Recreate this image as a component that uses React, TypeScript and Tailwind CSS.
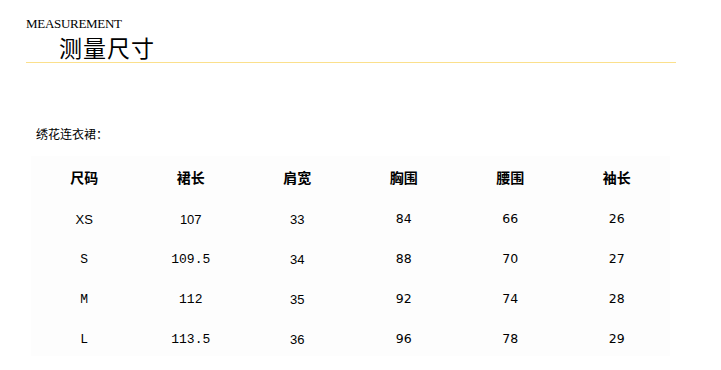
const headers = ["尺码", "裙长", "肩宽", "胸围", "腰围", "袖长"];

const mono = "font-['Liberation_Mono','Noto_Sans_CJK_SC',monospace]";
const arial = "font-['Liberation_Sans','Noto_Sans_CJK_SC',sans-serif]";
const tahoma = "font-['DejaVu_Sans','Noto_Sans_CJK_SC',sans-serif] text-[12.5px]";

// each cell: [text, font]
const rows: [string, string][][] = [
  [["XS", arial], ["107", arial], ["33", arial], ["84", tahoma], ["66", tahoma], ["26", tahoma]],
  [["S", mono], ["109.5", mono], ["34", arial], ["88", tahoma], ["70", tahoma], ["27", tahoma]],
  [["M", mono], ["112", mono], ["35", arial], ["92", tahoma], ["74", tahoma], ["28", tahoma]],
  [["L", mono], ["113.5", mono], ["36", arial], ["96", tahoma], ["78", tahoma], ["29", tahoma]],
];

export default function App() {
  return (
    <div className="w-[721px] h-[370px] bg-white text-black overflow-hidden">
      {/* Title */}
      <div className="pt-[15px] pl-[26px] pr-[45px]">
        <div className="font-['Liberation_Serif',serif] text-[13px] leading-[17px] tracking-[-0.3px]">
          MEASUREMENT
        </div>
        <div className="pl-[33px] font-['Noto_Sans_CJK_SC',sans-serif] text-[23px] leading-[30px] tracking-[1px]">
          测量尺寸
        </div>
        <div className="h-px bg-[#fbe08c]" />
      </div>

      {/* Subtitle */}
      <div className="mt-[63px] pl-[36px] font-['Noto_Sans_CJK_SC',sans-serif] text-[12px] leading-[16px]">
        绣花连衣裙：
      </div>

      {/* Table */}
      <div className="mt-[14px] ml-[31px] w-[639px] bg-[#fdfdfd]">
        <div className="grid grid-cols-6 h-[40px] pt-[2px] items-center text-center">
          {headers.map((h) => (
            <div key={h} className="font-['Noto_Sans_CJK_SC',sans-serif] font-bold text-[14px]">
              {h}
            </div>
          ))}
        </div>
        {rows.map((r, i) => (
          <div key={i} className="grid grid-cols-6 h-[40px] pt-[7px] items-center text-center text-[13px]">
            {r.map(([t, f], j) => (
              <div key={j} className={f}>
                {t}
              </div>
            ))}
          </div>
        ))}
      </div>
    </div>
  );
}
